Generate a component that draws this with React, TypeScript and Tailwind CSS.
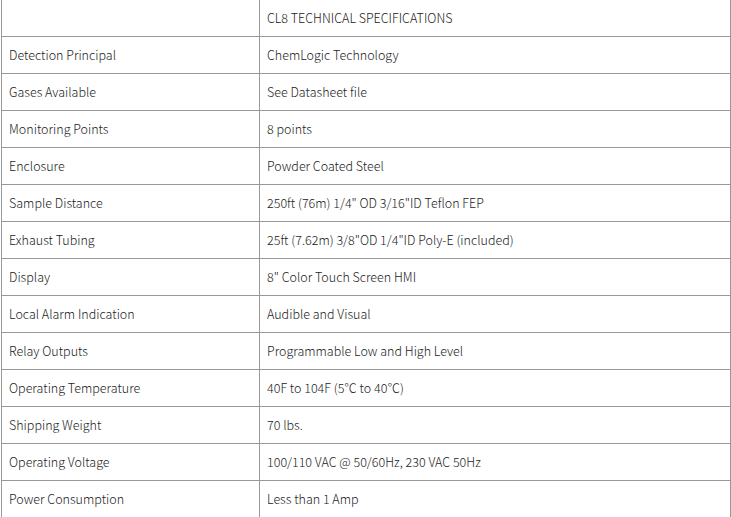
const rows: [string, string][] = [
  ["", "CL8 TECHNICAL SPECIFICATIONS"],
  ["Detection Principal", "ChemLogic Technology"],
  ["Gases Available", "See Datasheet file"],
  ["Monitoring Points", "8 points"],
  ["Enclosure", "Powder Coated Steel"],
  ["Sample Distance", "250ft (76m) 1/4\" OD 3/16\"ID Teflon FEP"],
  ["Exhaust Tubing", "25ft (7.62m) 3/8\"OD 1/4\"ID Poly-E (included)"],
  ["Display", "8\" Color Touch Screen HMI"],
  ["Local Alarm Indication", "Audible and Visual"],
  ["Relay Outputs", "Programmable Low and High Level"],
  ["Operating Temperature", "40F to 104F (5℃ to 40℃)"],
  ["Shipping Weight", "70 lbs."],
  ["Operating Voltage", "100/110 VAC @ 50/60Hz, 230 VAC 50Hz"],
  ["Power Consumption", "Less than 1 Amp"],
];

export default function App() {
  return (
    <div className="h-[517px] w-[731px] overflow-hidden bg-white">
      <table
        className="ml-px mt-[-1px] w-[730px] table-fixed border-collapse text-[12.5px] font-light text-[#222]"
        style={{ fontFamily: '"Noto Sans CJK KR", "Noto Sans", sans-serif' }}
      >
        <colgroup>
          <col className="w-[258px]" />
          <col />
        </colgroup>
        <tbody>
          {rows.map(([k, v], i) => (
            <tr key={i} className="h-[37px]">
              <td className="border border-[#999] px-[7px] py-0 align-middle">{k}</td>
              <td className="border border-[#999] px-[7px] py-0 align-middle">{v}</td>
            </tr>
          ))}
        </tbody>
      </table>
    </div>
  );
}
